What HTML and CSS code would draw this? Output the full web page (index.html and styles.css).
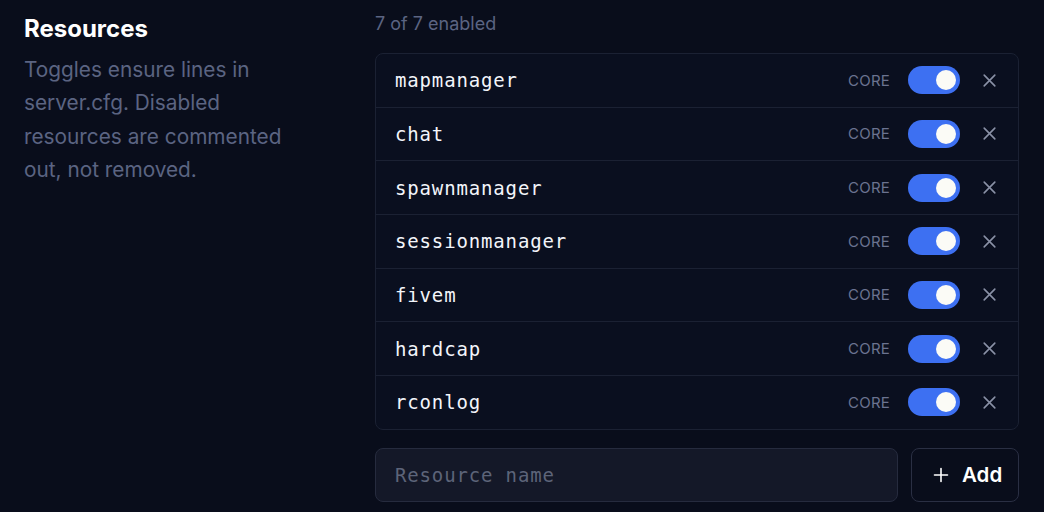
FILE: index.html
```html
<!DOCTYPE html>
<html lang="en">
<head>
<meta charset="utf-8">
<title>Resources</title>
<link rel="stylesheet" href="styles.css">
</head>
<body>
<section class="settings">
  <div class="intro">
    <h2 class="intro-title">Resources</h2>
    <p class="intro-text">Toggles ensure lines in server.cfg. Disabled resources are commented out, not removed.</p>
  </div>
  <div class="panel">
    <div class="count">7 of 7 enabled</div>
    <ul class="res-list">
      <li class="res-row"><span class="res-name">mapmanager</span><span class="tag">CORE</span><span class="switch on"><span class="knob"></span></span><button class="remove" aria-label="Remove"><svg viewBox="0 0 16 16"><path d="M3 3l10 10M13 3L3 13"/></svg></button></li>
      <li class="res-row"><span class="res-name">chat</span><span class="tag">CORE</span><span class="switch on"><span class="knob"></span></span><button class="remove" aria-label="Remove"><svg viewBox="0 0 16 16"><path d="M3 3l10 10M13 3L3 13"/></svg></button></li>
      <li class="res-row"><span class="res-name">spawnmanager</span><span class="tag">CORE</span><span class="switch on"><span class="knob"></span></span><button class="remove" aria-label="Remove"><svg viewBox="0 0 16 16"><path d="M3 3l10 10M13 3L3 13"/></svg></button></li>
      <li class="res-row"><span class="res-name">sessionmanager</span><span class="tag">CORE</span><span class="switch on"><span class="knob"></span></span><button class="remove" aria-label="Remove"><svg viewBox="0 0 16 16"><path d="M3 3l10 10M13 3L3 13"/></svg></button></li>
      <li class="res-row"><span class="res-name">fivem</span><span class="tag">CORE</span><span class="switch on"><span class="knob"></span></span><button class="remove" aria-label="Remove"><svg viewBox="0 0 16 16"><path d="M3 3l10 10M13 3L3 13"/></svg></button></li>
      <li class="res-row"><span class="res-name">hardcap</span><span class="tag">CORE</span><span class="switch on"><span class="knob"></span></span><button class="remove" aria-label="Remove"><svg viewBox="0 0 16 16"><path d="M3 3l10 10M13 3L3 13"/></svg></button></li>
      <li class="res-row"><span class="res-name">rconlog</span><span class="tag">CORE</span><span class="switch on"><span class="knob"></span></span><button class="remove" aria-label="Remove"><svg viewBox="0 0 16 16"><path d="M3 3l10 10M13 3L3 13"/></svg></button></li>
    </ul>
    <div class="add-bar">
      <input class="add-input" type="text" placeholder="Resource name">
      <button class="add-btn"><svg viewBox="0 0 16 16"><path d="M8 1.5v13M1.5 8h13"/></svg><span>Add</span></button>
    </div>
  </div>
</section>
</body>
</html>
```

FILE: styles.css
```css
* { box-sizing: border-box; }

html, body {
  margin: 0;
  background: #090d1b;
  color: #e8ebf2;
  font-family: Inter, "Noto Sans", sans-serif;
}

.settings {
  display: grid;
  grid-template-columns: 327px 1fr;
  column-gap: 24px;
  padding: 0 25px 0 24px;
  height: 512px;
  overflow: hidden;
}

.intro-title {
  margin: 14px 0 0;
  font-size: 24px;
  font-weight: 700;
  line-height: 30px;
  color: #ffffff;
}

.intro-text {
  margin: 9px 0 0;
  font-size: 20.8px;
  line-height: 33.3px;
  color: #5b6482;
  padding-right: 30px;
}

.panel {
  display: flex;
  flex-direction: column;
}

.count {
  margin-top: 12px;
  font-size: 18px;
  line-height: 23px;
  color: #5b6482;
}

.res-list {
  list-style: none;
  margin: 18px 0 0;
  padding: 0;
  border: 1px solid #1b2133;
  border-radius: 8px;
  background: #0a0f1f;
}

.res-row {
  display: flex;
  align-items: center;
  height: 53.67px;
  padding: 0 19px 0 19px;
  border-top: 1px solid #1b2133;
}

.res-row:first-child { border-top: 0; height: 52.67px; }

.res-name {
  flex: 1;
  font-family: "DejaVu Sans Mono", "Liberation Mono", monospace;
  font-size: 19px;
  letter-spacing: 0.85px;
  color: #f3f5fa;
}

.tag {
  font-size: 15px;
  letter-spacing: 0.2px;
  color: #6b7390;
  margin-right: 18px;
}

.switch {
  display: flex;
  align-items: center;
  width: 52px;
  height: 28px;
  border-radius: 14px;
  background: #3d70f2;
  padding: 4px;
}

.switch.on { justify-content: flex-end; }

.knob {
  width: 20px;
  height: 20px;
  border-radius: 50%;
  background: #fbfbf6;
}

.remove {
  display: flex;
  align-items: center;
  justify-content: center;
  width: 20px;
  height: 20px;
  margin-left: 19px;
  padding: 0;
  border: 0;
  background: none;
}

.remove svg {
  width: 17px;
  height: 17px;
  fill: none;
  stroke: #8a91a6;
  stroke-width: 1.5;
  stroke-linecap: round;
}

.add-bar {
  display: flex;
  gap: 13px;
  margin-top: 18px;
}

.add-input {
  flex: 1;
  height: 54px;
  padding: 0 19px;
  border: 1px solid #262b3e;
  border-radius: 8px;
  background: #141828;
  font-family: "DejaVu Sans Mono", "Liberation Mono", monospace;
  font-size: 19px;
  letter-spacing: 0.85px;
  color: #e8ebf2;
  outline: none;
}

.add-input::placeholder { color: #5d6479; }

.add-btn {
  display: flex;
  align-items: center;
  gap: 13px;
  width: 108px;
  height: 54px;
  padding: 0 0 0 21px;
  border: 1px solid #2a2f43;
  border-radius: 8px;
  background: #090d1b;
  color: #ffffff;
  font-family: Inter, "Noto Sans", sans-serif;
  font-size: 20.5px;
  font-weight: 600;
}

.add-btn svg {
  width: 16px;
  height: 16px;
  fill: none;
  stroke: #ffffff;
  stroke-width: 1.6;
  stroke-linecap: round;
}
```
